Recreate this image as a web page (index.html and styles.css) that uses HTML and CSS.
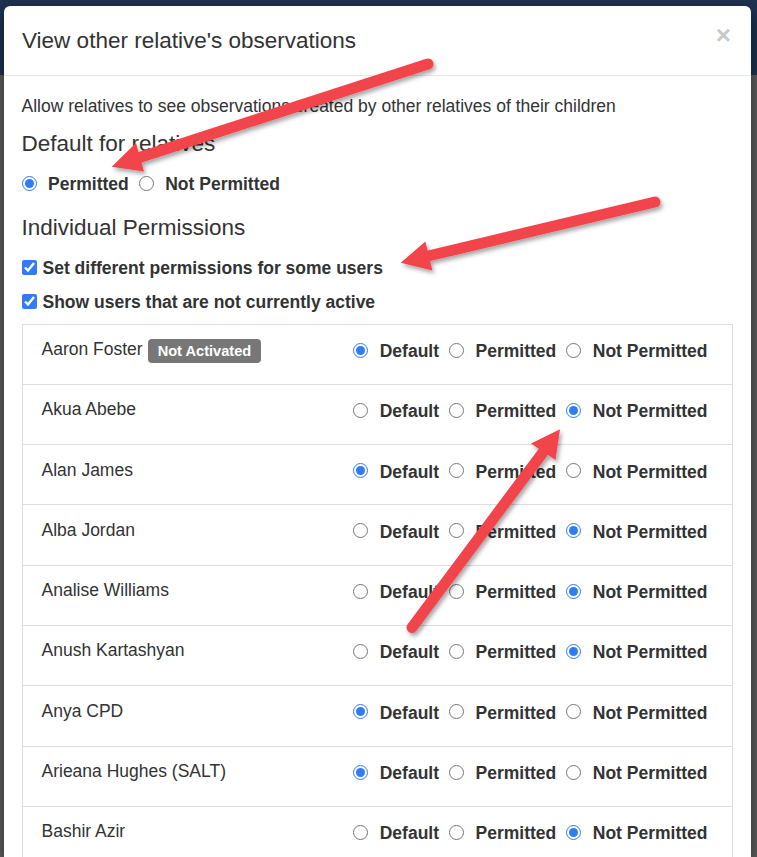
FILE: index.html
```html
<!DOCTYPE html>
<html lang="en">
<head>
<meta charset="utf-8">
<title>View other relative's observations</title>
<link rel="stylesheet" href="styles.css">
</head>
<body>
<div class="backdrop-top"></div>
<div class="modal">
  <div class="modal-header">
    <h4 class="modal-title">View other relative's observations</h4>
    <span class="close">×</span>
  </div>
  <div class="modal-body">
    <p class="intro">Allow relatives to see observations created by other relatives of their children</p>
    <h4 class="section-title first">Default for relatives</h4>
    <div class="radio-group default-group">
      <label class="opt"><input type="radio" name="def" checked><span>Permitted</span></label>
      <label class="opt"><input type="radio" name="def"><span>Not Permitted</span></label>
    </div>
    <h4 class="section-title second">Individual Permissions</h4>
    <label class="check first-check"><input type="checkbox" checked><span>Set different permissions for some users</span></label>
    <label class="check second-check"><input type="checkbox" checked><span>Show users that are not currently active</span></label>

    <div class="perm-list">
      <div class="perm-row">
        <div class="name">Aaron Foster <span class="badge">Not Activated</span></div>
        <div class="radio-group">
          <label class="opt"><input type="radio" name="u1" checked><span>Default</span></label>
          <label class="opt"><input type="radio" name="u1"><span>Permitted</span></label>
          <label class="opt"><input type="radio" name="u1"><span>Not Permitted</span></label>
        </div>
      </div>
      <div class="perm-row">
        <div class="name">Akua Abebe</div>
        <div class="radio-group">
          <label class="opt"><input type="radio" name="u2"><span>Default</span></label>
          <label class="opt"><input type="radio" name="u2"><span>Permitted</span></label>
          <label class="opt"><input type="radio" name="u2" checked><span>Not Permitted</span></label>
        </div>
      </div>
      <div class="perm-row">
        <div class="name">Alan James</div>
        <div class="radio-group">
          <label class="opt"><input type="radio" name="u3" checked><span>Default</span></label>
          <label class="opt"><input type="radio" name="u3"><span>Permitted</span></label>
          <label class="opt"><input type="radio" name="u3"><span>Not Permitted</span></label>
        </div>
      </div>
      <div class="perm-row">
        <div class="name">Alba Jordan</div>
        <div class="radio-group">
          <label class="opt"><input type="radio" name="u4"><span>Default</span></label>
          <label class="opt"><input type="radio" name="u4"><span>Permitted</span></label>
          <label class="opt"><input type="radio" name="u4" checked><span>Not Permitted</span></label>
        </div>
      </div>
      <div class="perm-row">
        <div class="name">Analise Williams</div>
        <div class="radio-group">
          <label class="opt"><input type="radio" name="u5"><span>Default</span></label>
          <label class="opt"><input type="radio" name="u5"><span>Permitted</span></label>
          <label class="opt"><input type="radio" name="u5" checked><span>Not Permitted</span></label>
        </div>
      </div>
      <div class="perm-row">
        <div class="name">Anush Kartashyan</div>
        <div class="radio-group">
          <label class="opt"><input type="radio" name="u6"><span>Default</span></label>
          <label class="opt"><input type="radio" name="u6"><span>Permitted</span></label>
          <label class="opt"><input type="radio" name="u6" checked><span>Not Permitted</span></label>
        </div>
      </div>
      <div class="perm-row">
        <div class="name">Anya CPD</div>
        <div class="radio-group">
          <label class="opt"><input type="radio" name="u7" checked><span>Default</span></label>
          <label class="opt"><input type="radio" name="u7"><span>Permitted</span></label>
          <label class="opt"><input type="radio" name="u7"><span>Not Permitted</span></label>
        </div>
      </div>
      <div class="perm-row">
        <div class="name">Arieana Hughes (SALT)</div>
        <div class="radio-group">
          <label class="opt"><input type="radio" name="u8" checked><span>Default</span></label>
          <label class="opt"><input type="radio" name="u8"><span>Permitted</span></label>
          <label class="opt"><input type="radio" name="u8"><span>Not Permitted</span></label>
        </div>
      </div>
      <div class="perm-row">
        <div class="name">Bashir Azir</div>
        <div class="radio-group">
          <label class="opt"><input type="radio" name="u9"><span>Default</span></label>
          <label class="opt"><input type="radio" name="u9"><span>Permitted</span></label>
          <label class="opt"><input type="radio" name="u9" checked><span>Not Permitted</span></label>
        </div>
      </div>
    </div>
  </div>
</div>

<svg class="annotations" width="757" height="857" viewBox="0 0 757 857" aria-hidden="true">
  <defs>
    <filter id="shadow" x="-10%" y="-10%" width="130%" height="130%">
      <feDropShadow dx="2" dy="3" stdDeviation="2.2" flood-color="#000" flood-opacity="0.35"/>
    </filter>
  </defs>
  <g filter="url(#shadow)" fill="#f2444b" stroke="#f2444b">
    <line x1="428" y1="64" x2="138" y2="158" stroke-width="11" stroke-linecap="round"/>
    <polygon points="111.7,166.7 136,143 144,171.5" stroke="none"/>
    <line x1="655" y1="202" x2="426" y2="256.5" stroke-width="11" stroke-linecap="round"/>
    <polygon points="400.7,262.7 425.4,241.4 432.4,270.6" stroke="none"/>
    <line x1="412" y1="627.5" x2="544" y2="451" stroke-width="11" stroke-linecap="round"/>
    <polygon points="560,429.3 531,443.5 555.5,460" stroke="none"/>
  </g>
</svg>
</body>
</html>
```

FILE: styles.css
```css
html, body {
  margin: 0;
  padding: 0;
}

body {
  width: 757px;
  height: 857px;
  overflow: hidden;
  position: relative;
  background: #5d5d5d;
  font-family: "Liberation Sans", Arial, sans-serif;
  color: #333;
}

.backdrop-top {
  position: absolute;
  left: 0;
  top: 0;
  width: 757px;
  height: 75px;
  background: #1e3251;
}

.modal {
  position: relative;
  margin: 6px 0 0 4px;
  width: 747px;
  height: 851px;
  background: #fff;
  border-radius: 6px 6px 0 0;
  box-shadow: 0 5px 15px rgba(0, 0, 0, 0.5);
  overflow: hidden;
}

.modal-header {
  display: flex;
  justify-content: space-between;
  align-items: flex-start;
  padding: 18.5px 20px 18.5px 18px;
  border-bottom: 1px solid #e5e5e5;
}

.modal-title {
  margin: 0;
  font-size: 22.5px;
  font-weight: normal;
  line-height: 32px;
  color: #333;
}

.close {
  font-size: 26px;
  font-weight: bold;
  line-height: 1;
  color: #c8c8c8;
  margin-top: -3px;
}

.modal-body {
  padding: 18px 19px 0 17.5px;
}

.intro {
  margin: 0;
  font-size: 17.5px;
  line-height: 25px;
}

.section-title {
  margin: 0;
  font-size: 22.5px;
  font-weight: normal;
  line-height: 25px;
  color: #333;
}

.section-title.first {
  margin-top: 12px;
}

.section-title.second {
  margin-top: 18px;
}

.radio-group {
  display: flex;
  align-items: center;
  gap: 10px;
}

.default-group {
  margin-top: 16px;
}

.opt {
  display: inline-flex;
  align-items: center;
  gap: 11.5px;
  font-size: 17.5px;
  font-weight: bold;
  line-height: 25px;
  color: #333;
}

.opt input {
  width: 15px;
  height: 15px;
  margin: 0;
  position: relative;
  top: -1.5px;
  accent-color: #2f7cf6;
}

.check {
  display: flex;
  align-items: center;
  gap: 6px;
  font-size: 17.5px;
  font-weight: bold;
  line-height: 25px;
  color: #333;
}

.check input {
  width: 15px;
  height: 15px;
  margin: 0;
  position: relative;
  top: -1px;
  accent-color: #2f7cf6;
}

.first-check {
  margin-top: 16px;
}

.second-check {
  margin-top: 9px;
}

.perm-list {
  margin-top: 8.5px;
  border: 1px solid #ddd;
  border-bottom: none;
  width: 709px;
}

.perm-row {
  box-sizing: border-box;
  height: 60.3px;
  display: flex;
  justify-content: space-between;
  align-items: flex-start;
  padding: 12.5px 24px 0 19px;
  border-bottom: 1px solid #ddd;
}

.name {
  display: flex;
  align-items: flex-start;
  gap: 5px;
  font-size: 17.5px;
  line-height: 25px;
  color: #333;
}

.badge {
  display: inline-block;
  margin-top: 1.5px;
  height: 24.4px;
  line-height: 24.4px;
  padding: 0 9.7px 0 10px;
  border-radius: 4px;
  background: #777;
  color: #fff;
  font-size: 14.6px;
  font-weight: bold;
}

.perm-row .radio-group {
  margin-top: 2px;
}

.annotations {
  position: absolute;
  left: 0;
  top: 0;
  pointer-events: none;
}
```
